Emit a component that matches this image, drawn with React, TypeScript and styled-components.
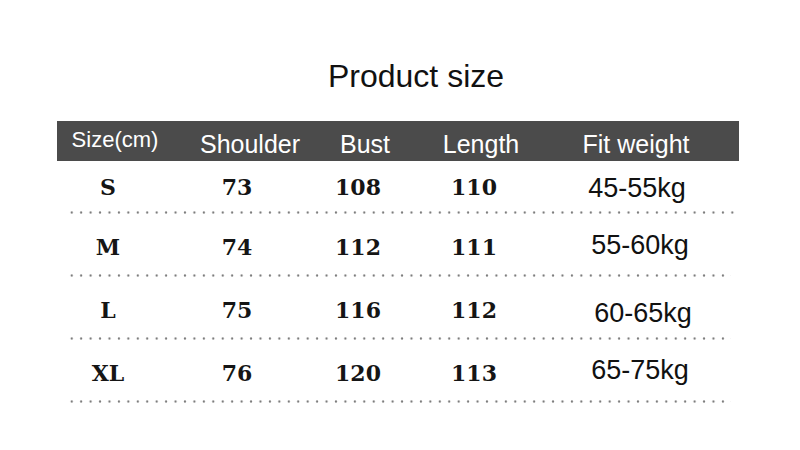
import React from 'react'
import styled, { createGlobalStyle } from 'styled-components'

const Global = createGlobalStyle`
    html, body {
        margin: 0;
        padding: 0;
        background: #fff;
    }
`

const Page = styled.div`
    width: 800px;
    height: 450px;
    overflow: hidden;
    background: #fff;
    display: flex;
    flex-direction: column;
    font-family: "Liberation Sans", Arial, sans-serif;
`

const Title = styled.h1`
    margin: 58px 0 0 0;
    padding-left: 32px;
    height: 36px;
    line-height: 36px;
    font-size: 32px;
    font-weight: 400;
    color: #111;
    text-align: center;
`

const Table = styled.div`
    margin: 27px 0 0 57px;
    width: 682px;
    display: flex;
    flex-direction: column;
`

const HeadBar = styled.div`
    height: 40px;
    background: #4b4b4b;
    display: grid;
    grid-template-columns: 116px 154px 76px 156px 154px 1fr;
    align-items: center;
`

const HeadCell = styled.div<{ $small?: boolean }>`
    color: #fff;
    text-align: center;
    white-space: nowrap;
    font-size: ${p => (p.$small ? '22px' : '25px')};
    padding: ${p => (p.$small ? '0 0 3px 0' : '6px 0 0 0')};
`

const Row = styled.div<{ $first?: boolean }>`
    height: ${p => (p.$first ? '50px' : '60px')};
    box-sizing: border-box;
    padding-top: ${p => (p.$first ? '2px' : '6px')};
    display: grid;
    grid-template-columns: 102px 156px 86px 146px 182px 1fr;
    align-items: center;
`

const Value = styled.div`
    text-align: center;
    font-family: "DejaVu Serif", "Liberation Serif", serif;
    font-weight: 700;
    font-size: 22px;
    color: #151515;
    white-space: nowrap;
`

const Weight = styled.div<{ $dx: number; $dy: number }>`
    text-align: center;
    font-size: 27px;
    color: #111;
    white-space: nowrap;
    transform: translate(${p => p.$dx}px, ${p => p.$dy}px);
`

const Dots = styled.div<{ $w: number }>`
    margin-left: 10px;
    width: ${p => p.$w}px;
    height: 3px;
    background-image: radial-gradient(circle at center, #7c7c7c 0, #7c7c7c 0.8px, rgba(124, 124, 124, 0) 1.5px);
    background-size: 9.45px 3px;
    background-repeat: repeat-x;
`

const rows = [
    { size: 'S', shoulder: '73', bust: '108', length: '110', weight: '45-55kg', dx: -1, dy: 1, w: 668 },
    { size: 'M', shoulder: '74', bust: '112', length: '111', weight: '55-60kg', dx: 2, dy: -2, w: 664 },
    { size: 'L', shoulder: '75', bust: '116', length: '112', weight: '60-65kg', dx: 5, dy: 3, w: 664 },
    { size: 'XL', shoulder: '76', bust: '120', length: '113', weight: '65-75kg', dx: 2, dy: -3, w: 664 },
]

const App: React.FC = () => (
    <Page>
        <Global />
        <Title>Product size</Title>
        <Table>
            <HeadBar>
                <HeadCell $small>Size(cm)</HeadCell>
                <HeadCell>Shoulder</HeadCell>
                <HeadCell>Bust</HeadCell>
                <HeadCell>Length</HeadCell>
                <HeadCell>Fit weight</HeadCell>
                <div />
            </HeadBar>

            {rows.map((r, i) => (
                <React.Fragment key={r.size}>
                    <Row $first={i === 0}>
                        <Value>{r.size}</Value>
                        <Value>{r.shoulder}</Value>
                        <Value>{r.bust}</Value>
                        <Value>{r.length}</Value>
                        <Weight $dx={r.dx} $dy={r.dy}>{r.weight}</Weight>
                        <div />
                    </Row>
                    <Dots $w={r.w} />
                </React.Fragment>
            ))}
        </Table>
    </Page>
)

export default App
